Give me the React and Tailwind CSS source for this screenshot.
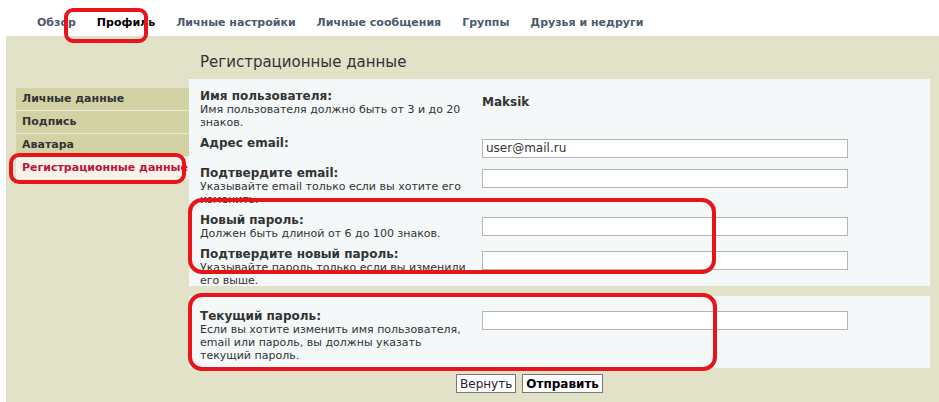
import React from "react";

const F = { fontFamily: '"DejaVu Sans", Verdana, sans-serif' };

function Row({ label, desc, children, h }) {
  return (
    <div className={`flex ${h}`}>
      <div className="w-[293px] pl-[11px] pr-2">
        <div className="font-bold text-[12px] leading-[14px] text-[#333]">{label}</div>
        {desc && <div className="text-[11px] leading-[13px] text-[#333] w-[270px]">{desc}</div>}
      </div>
      <div className="flex-1">{children}</div>
    </div>
  );
}

const Input = ({ value }) => (
  <input readOnly value={value || ""} className="w-[366px] h-[19px] border border-[#b4b4b4] bg-white px-[3px] text-[12px] text-[#333] outline-none" style={F} />
);

export default function App() {
  const tabs = ["Обзор", "Профиль", "Личные настройки", "Личные сообщения", "Группы", "Друзья и недруги"];
  const menu = ["Личные данные", "Подпись", "Аватара", "Регистрационные данные"];
  return (
    <div className="relative w-[939px] h-[402px] bg-white overflow-hidden" style={F}>
      <div className="flex h-[36px] items-center pl-[37px] gap-[21px] pt-[10px]">
        {tabs.map((t, i) => (
          <span key={t} className={`text-[11px] font-bold ${i === 1 ? "text-black" : "text-[#4b5a6e]"}`}>{t}</span>
        ))}
      </div>
      <div className="ml-[6px] h-[366px] bg-[#e2e2c8] flex">
        <div className="w-[183px] pt-[52px] pl-[10px]">
          {menu.map((m, i) => (
            <div key={m} className={`h-[23px] flex items-center pl-[6px] text-[11px] font-bold border-b border-[#e8e8d4] ${i === 3 ? "bg-[#f3f3ea] text-[#c0143c]" : "bg-[#d2d2a5] text-[#333]"}`}>{m}</div>
          ))}
        </div>
        <div className="flex-1 pr-[9px]">
          <div className="h-[43px] pl-[11px] pt-[15px] text-[15px] text-[#333]">Регистрационные данные</div>
          <div className="bg-[#f4f8f8] h-[207px] pt-[10px]">
            <Row h="h-[47px]" label="Имя пользователя:" desc="Имя пользователя должно быть от 3 и до 20 знаков.">
              <span className="font-bold text-[12px] text-[#333] leading-[14px]">Maksik</span>
            </Row>
            <Row h="h-[30px]" label="Адрес email:"><div className="-mt-[1px]"><Input value="user@mail.ru" /></div></Row>
            <Row h="h-[47px]" label="Подтвердите email:" desc="Указывайте email только если вы хотите его изменить."><div className="-mt-[1px]"><Input /></div></Row>
            <Row h="h-[34px]" label="Новый пароль:" desc="Должен быть длиной от 6 до 100 знаков."><Input /></Row>
            <Row h="h-[30px]" label="Подтвердите новый пароль:" desc="Указывайте пароль только если вы изменили его выше."><Input /></Row>
          </div>
          <div className="bg-[#f4f8f8] h-[72px] mt-[10px] pt-[13px]">
            <Row h="" label="Текущий пароль:" desc="Если вы хотите изменить имя пользователя, email или пароль, вы должны указать текущий пароль."><div className="-mt-[2px]"><Input /></div></Row>
          </div>
          <div className="flex justify-center gap-[6px] mt-[6px] pr-[60px]">
            <button className="h-[19px] px-[3px] border border-[#777] bg-white text-[12px] text-[#222]" style={F}>Вернуть</button>
            <button className="h-[19px] px-[3px] border border-[#777] bg-white text-[12px] font-bold text-black" style={F}>Отправить</button>
          </div>
        </div>
      </div>
      <div className="absolute left-[64px] top-[8px] w-[84px] h-[35px] border-[4px] border-[#e8141c] rounded-[9px]" />
      <div className="absolute left-[9px] top-[153px] w-[177px] h-[31px] border-[4px] border-[#e8141c] rounded-[10px]" />
      <div className="absolute left-[188px] top-[198px] w-[528px] h-[76px] border-[4px] border-[#e8141c] rounded-[14px]" />
      <div className="absolute left-[188px] top-[293px] w-[529px] h-[78px] border-[4px] border-[#e8141c] rounded-[14px]" />
    </div>
  );
}
